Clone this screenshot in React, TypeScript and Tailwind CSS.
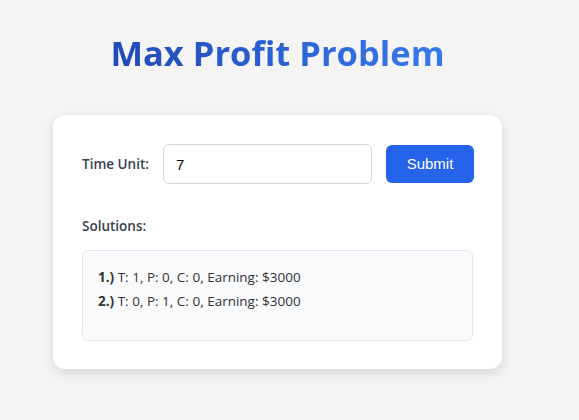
import React, { useState } from "react";

const solutions = [
  { t: 1, p: 0, c: 0, earning: 3000 },
  { t: 0, p: 1, c: 0, earning: 3000 },
];

const App: React.FC = () => {
  const [unit, setUnit] = useState("7");

  return (
    <div
      className="min-h-[420px] w-[579px] bg-[#f4f4f4] pl-[53px] pt-[29px]"
      style={{ fontFamily: "'Open Sans', sans-serif" }}
    >
      <div className="w-[449px]">
        <h1 className="text-center text-[34.5px] font-bold leading-[48px] bg-gradient-to-r from-[#1e40af] to-[#3b82f6] bg-clip-text text-transparent">
          Max Profit Problem
        </h1>

        <div className="mt-[38px] rounded-xl bg-white px-[29px] pt-[29px] pb-[28px] shadow-[0_4px_12px_rgba(0,0,0,0.12)]">
          <div className="flex items-center">
            <label className="shrink-0 whitespace-nowrap text-[13.5px] font-semibold text-[#374151]">
              Time Unit:
            </label>
            <input
              value={unit}
              onChange={(e) => setUnit(e.target.value)}
              className="ml-[14px] h-[40px] w-[209px] shrink-0 rounded-md border border-[#d1d5db] px-3 text-[15px] text-black outline-none"
              style={{ fontFamily: "'Liberation Sans', Arial, sans-serif" }}
            />
            <button
              className="ml-[14px] h-[38px] w-[88px] shrink-0 rounded-md bg-[#2563eb] text-[15px] text-white"
              style={{ fontFamily: "'Liberation Sans', Arial, sans-serif" }}
            >
              Submit
            </button>
          </div>

          <h3 className="mt-[32px] text-[13.5px] font-semibold text-[#374151]">Solutions:</h3>

          <div className="mt-[14px] min-h-[91px] rounded-md border border-[#e2e8f0] bg-[#f8fafc] px-[15px] py-[14px] text-[13.5px] leading-[24px] text-[#333]">
            {solutions.map((s, i) => (
              <div key={i}>
                <span className="font-bold">{i + 1}.)</span> T: {s.t}, P: {s.p}, C: {s.c}, Earning: ${s.earning}
              </div>
            ))}
          </div>
        </div>
      </div>
    </div>
  );
};

export default App;
